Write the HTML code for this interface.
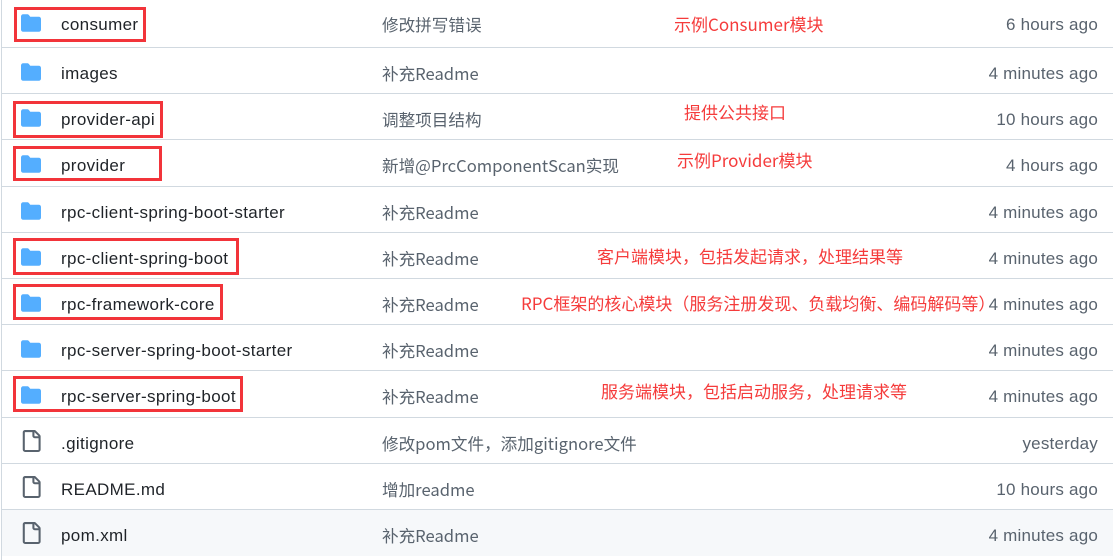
<!DOCTYPE html>
<html><head><meta charset="utf-8"><style>
body{margin:0;width:1113px;height:555px;overflow:hidden;background:#fff;font-family:"Liberation Sans","Noto Sans CJK SC",sans-serif;position:relative}
.wrap{position:absolute;left:1px;top:0;width:1130px;height:560px;border-left:1px solid #d1d9e0}
.row{position:absolute;left:2px;width:1111px;height:46px;border-top:1px solid #d1d9e0;font-size:17px;line-height:46px}
.row svg{position:absolute;left:18px;top:14px}
.n{position:absolute;left:59px;top:3px;color:#1f2328;letter-spacing:0.35px}
.m{position:absolute;left:380px;top:2px;color:#59636e;font-family:"Noto Sans CJK SC","Liberation Sans",sans-serif;font-size:16.6px}
.t{position:absolute;right:15px;top:3px;color:#59636e;letter-spacing:0.2px}
.box{position:absolute;border:3px solid #f2343a;box-sizing:border-box}
.r{position:absolute;color:#f53b3b;font-family:"Noto Sans CJK SC",sans-serif;font-size:17px;white-space:nowrap;line-height:1}
</style></head><body>
<div class="wrap"></div>
<div class="row" style="top:-1px;border-top:none"><svg width="22" height="20" viewBox="0 0 16 16"><path fill="#54aeff" d="M1.75 1A1.75 1.75 0 0 0 0 2.75v10.5C0 14.216.784 15 1.75 15h12.5A1.75 1.75 0 0 0 16 13.25v-8.5A1.75 1.75 0 0 0 14.25 3H7.5a.25.25 0 0 1-.2-.1l-.9-1.2C6.07 1.26 5.55 1 5 1H1.75Z"/></svg><span class="n">consumer</span><span class="m">修改拼写错误</span><span class="t">6 hours ago</span></div>
<div class="row" style="top:47px"><svg width="22" height="20" viewBox="0 0 16 16"><path fill="#54aeff" d="M1.75 1A1.75 1.75 0 0 0 0 2.75v10.5C0 14.216.784 15 1.75 15h12.5A1.75 1.75 0 0 0 16 13.25v-8.5A1.75 1.75 0 0 0 14.25 3H7.5a.25.25 0 0 1-.2-.1l-.9-1.2C6.07 1.26 5.55 1 5 1H1.75Z"/></svg><span class="n">images</span><span class="m">补充Readme</span><span class="t">4 minutes ago</span></div>
<div class="row" style="top:93px"><svg width="22" height="20" viewBox="0 0 16 16"><path fill="#54aeff" d="M1.75 1A1.75 1.75 0 0 0 0 2.75v10.5C0 14.216.784 15 1.75 15h12.5A1.75 1.75 0 0 0 16 13.25v-8.5A1.75 1.75 0 0 0 14.25 3H7.5a.25.25 0 0 1-.2-.1l-.9-1.2C6.07 1.26 5.55 1 5 1H1.75Z"/></svg><span class="n">provider-api</span><span class="m">调整项目结构</span><span class="t">10 hours ago</span></div>
<div class="row" style="top:139px"><svg width="22" height="20" viewBox="0 0 16 16"><path fill="#54aeff" d="M1.75 1A1.75 1.75 0 0 0 0 2.75v10.5C0 14.216.784 15 1.75 15h12.5A1.75 1.75 0 0 0 16 13.25v-8.5A1.75 1.75 0 0 0 14.25 3H7.5a.25.25 0 0 1-.2-.1l-.9-1.2C6.07 1.26 5.55 1 5 1H1.75Z"/></svg><span class="n">provider</span><span class="m">新增@PrcComponentScan实现</span><span class="t">4 hours ago</span></div>
<div class="row" style="top:186px"><svg width="22" height="20" viewBox="0 0 16 16"><path fill="#54aeff" d="M1.75 1A1.75 1.75 0 0 0 0 2.75v10.5C0 14.216.784 15 1.75 15h12.5A1.75 1.75 0 0 0 16 13.25v-8.5A1.75 1.75 0 0 0 14.25 3H7.5a.25.25 0 0 1-.2-.1l-.9-1.2C6.07 1.26 5.55 1 5 1H1.75Z"/></svg><span class="n">rpc-client-spring-boot-starter</span><span class="m">补充Readme</span><span class="t">4 minutes ago</span></div>
<div class="row" style="top:232px"><svg width="22" height="20" viewBox="0 0 16 16"><path fill="#54aeff" d="M1.75 1A1.75 1.75 0 0 0 0 2.75v10.5C0 14.216.784 15 1.75 15h12.5A1.75 1.75 0 0 0 16 13.25v-8.5A1.75 1.75 0 0 0 14.25 3H7.5a.25.25 0 0 1-.2-.1l-.9-1.2C6.07 1.26 5.55 1 5 1H1.75Z"/></svg><span class="n">rpc-client-spring-boot</span><span class="m">补充Readme</span><span class="t">4 minutes ago</span></div>
<div class="row" style="top:278px"><svg width="22" height="20" viewBox="0 0 16 16"><path fill="#54aeff" d="M1.75 1A1.75 1.75 0 0 0 0 2.75v10.5C0 14.216.784 15 1.75 15h12.5A1.75 1.75 0 0 0 16 13.25v-8.5A1.75 1.75 0 0 0 14.25 3H7.5a.25.25 0 0 1-.2-.1l-.9-1.2C6.07 1.26 5.55 1 5 1H1.75Z"/></svg><span class="n">rpc-framework-core</span><span class="m">补充Readme</span><span class="t">4 minutes ago</span></div>
<div class="row" style="top:324px"><svg width="22" height="20" viewBox="0 0 16 16"><path fill="#54aeff" d="M1.75 1A1.75 1.75 0 0 0 0 2.75v10.5C0 14.216.784 15 1.75 15h12.5A1.75 1.75 0 0 0 16 13.25v-8.5A1.75 1.75 0 0 0 14.25 3H7.5a.25.25 0 0 1-.2-.1l-.9-1.2C6.07 1.26 5.55 1 5 1H1.75Z"/></svg><span class="n">rpc-server-spring-boot-starter</span><span class="m">补充Readme</span><span class="t">4 minutes ago</span></div>
<div class="row" style="top:370px"><svg width="22" height="20" viewBox="0 0 16 16"><path fill="#54aeff" d="M1.75 1A1.75 1.75 0 0 0 0 2.75v10.5C0 14.216.784 15 1.75 15h12.5A1.75 1.75 0 0 0 16 13.25v-8.5A1.75 1.75 0 0 0 14.25 3H7.5a.25.25 0 0 1-.2-.1l-.9-1.2C6.07 1.26 5.55 1 5 1H1.75Z"/></svg><span class="n">rpc-server-spring-boot</span><span class="m">补充Readme</span><span class="t">4 minutes ago</span></div>
<div class="row" style="top:417px"><svg width="22" height="22" viewBox="0 0 16 16" style="top:12px"><path fill="#59636e" d="M2 1.75C2 .784 2.784 0 3.750 0h6.586c.464 0 .909.184 1.237.513l2.914 2.914c.329.328.513.773.513 1.237v9.586A1.75 1.75 0 0 1 13.25 16h-9.5A1.75 1.75 0 0 1 2 14.25Zm1.75-.25a.25.25 0 0 0-.25.25v12.5c0 .138.112.25.25.25h9.5a.25.25 0 0 0 .25-.25V6h-2.75A1.75 1.75 0 0 1 9 4.25V1.5Zm6.75.062V4.25c0 .138.112.25.25.25h2.688l-.011-.013-2.914-2.914-.013-.011Z"/></svg><span class="n">.gitignore</span><span class="m">修改pom文件，添加gitignore文件</span><span class="t">yesterday</span></div>
<div class="row" style="top:463px"><svg width="22" height="22" viewBox="0 0 16 16" style="top:12px"><path fill="#59636e" d="M2 1.75C2 .784 2.784 0 3.75 0h6.586c.464 0 .909.184 1.237.513l2.914 2.914c.329.328.513.773.513 1.237v9.586A1.75 1.75 0 0 1 13.25 16h-9.5A1.75 1.75 0 0 1 2 14.25Zm1.75-.25a.25.25 0 0 0-.25.25v12.5c0 .138.112.25.25.25h9.5a.25.25 0 0 0 .25-.25V6h-2.75A1.75 1.75 0 0 1 9 4.25V1.5Zm6.75.062V4.25c0 .138.112.25.25.25h2.688l-.011-.013-2.914-2.914-.013-.011Z"/></svg><span class="n">README.md</span><span class="m">增加readme</span><span class="t">10 hours ago</span></div>
<div class="row" style="top:509px;background:#f6f8fa"><svg width="22" height="22" viewBox="0 0 16 16" style="top:12px"><path fill="#59636e" d="M2 1.75C2 .784 2.784 0 3.75 0h6.586c.464 0 .909.184 1.237.513l2.914 2.914c.329.328.513.773.513 1.237v9.586A1.75 1.75 0 0 1 13.25 16h-9.5A1.75 1.75 0 0 1 2 14.25Zm1.75-.25a.25.25 0 0 0-.25.25v12.5c0 .138.112.25.25.25h9.5a.25.25 0 0 0 .25-.25V6h-2.75A1.75 1.75 0 0 1 9 4.25V1.5Zm6.75.062V4.25c0 .138.112.25.25.25h2.688l-.011-.013-2.914-2.914-.013-.011Z"/></svg><span class="n">pom.xml</span><span class="m">补充Readme</span><span class="t">4 minutes ago</span></div>

<div class="box" style="left:14px;top:7px;width:132px;height:35px"></div>
<div class="box" style="left:13px;top:101px;width:150px;height:37px"></div>
<div class="box" style="left:13px;top:146px;width:149px;height:35px"></div>
<div class="box" style="left:13px;top:238px;width:226px;height:37px"></div>
<div class="box" style="left:13px;top:284px;width:210px;height:36px"></div>
<div class="box" style="left:13px;top:376px;width:230px;height:36px"></div>

<div class="r" style="left:674px;top:15px">示例Consumer模块</div>
<div class="r" style="left:684px;top:103px">提供公共接口</div>
<div class="r" style="left:677px;top:151px">示例Provider模块</div>
<div class="r" style="left:597px;top:247px">客户端模块，包括发起请求，处理结果等</div>
<div class="r" style="left:521px;top:294px">RPC框架的核心模块（服务注册发现、负载均衡、编码解码等）</div>
<div class="r" style="left:601px;top:382px">服务端模块，包括启动服务，处理请求等</div>
</body></html>
